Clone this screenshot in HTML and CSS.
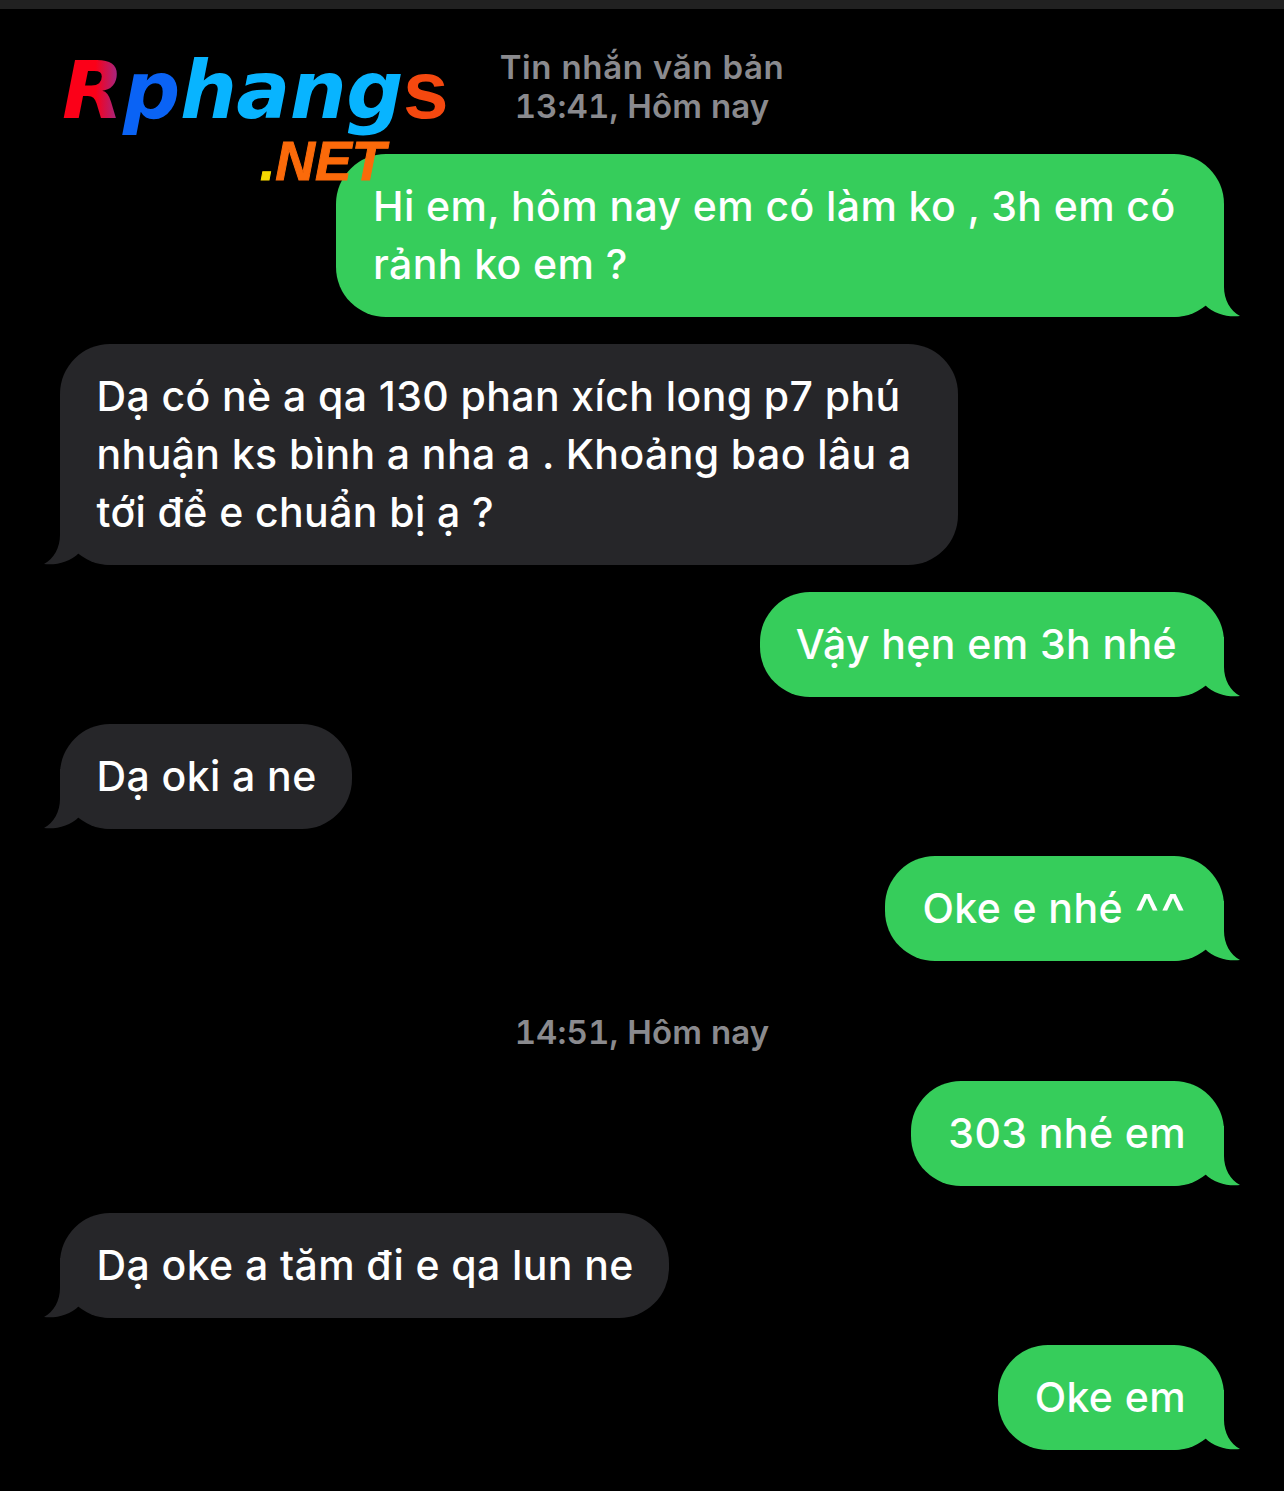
FILE: index.html
```html
<!DOCTYPE html>
<html lang="vi">
<head>
<meta charset="utf-8">
<title>Tin nhắn</title>
<link rel="stylesheet" href="styles.css">
</head>
<body>
<svg class="defs" width="0" height="0" aria-hidden="true"><symbol id="tail" viewBox="0 0 70 60"><path d="M54 0V30C54 42 60 54 70 59C58 60.500 44 57 35 48C28 54 16 60 0 60V0Z"/></symbol></svg>
<div class="topbar"></div>
<div class="logo">
  <div class="logo-main"><span class="l-r">R</span><span class="l-p">p</span><span class="l-h">hang</span><span class="l-s">s</span></div>
  <div class="logo-net"><span class="l-dot">.</span>NET</div>
</div>
<main class="thread">
  <div class="time time-first"><span class="time-label">Tin nhắn văn bản</span><br>13:41, Hôm nay</div>
  <div class="bubble out wide">Hi em, hôm nay em có làm ko , 3h em có rảnh ko em ?<svg class="tail"><use href="#tail"/></svg></div>
  <div class="bubble in wide-in">Dạ có nè a qa 130 phan xích long p7 phú nhuận ks bình a nha a . Khoảng bao lâu a tới để e chuẩn bị ạ ?<svg class="tail"><use href="#tail"/></svg></div>
  <div class="bubble out roomy">Vậy hẹn em 3h nhé<svg class="tail"><use href="#tail"/></svg></div>
  <div class="bubble in">Dạ oki a ne<svg class="tail"><use href="#tail"/></svg></div>
  <div class="bubble out">Oke e nhé <span class="carets">^^</span><svg class="tail"><use href="#tail"/></svg></div>
  <div class="time time-mid">14:51, Hôm nay</div>
  <div class="bubble out">303 nhé em<svg class="tail"><use href="#tail"/></svg></div>
  <div class="bubble in">Dạ oke a tăm đi e qa lun ne<svg class="tail"><use href="#tail"/></svg></div>
  <div class="bubble out">Oke em<svg class="tail"><use href="#tail"/></svg></div>
</main>
</body>
</html>
```
FILE: styles.css
```css
* { box-sizing: border-box; }
html, body { margin: 0; height: 100%; }
body {
  background: #000;
  color: #fff;
  font-family: Inter, "Noto Sans", sans-serif;
  position: relative;
  overflow: hidden;
}
.defs { position: absolute; }
.topbar { height: 9px; background: #212121; }
.thread {
  display: flex;
  flex-direction: column;
  gap: 27px;
  padding: 0 60px;
}
.time {
  align-self: center;
  text-align: center;
  color: #8a8a8e;
  font-size: 33px;
  font-weight: 600;
  font-variant-numeric: tabular-nums;
  letter-spacing: 0.1px;
  line-height: 39px;
}
.time-label { letter-spacing: 0.6px; }
.time-first { margin-top: 39px; margin-bottom: 1px; }
.time-mid { margin-top: 25px; margin-bottom: 2px; }
.bubble {
  position: relative;
  isolation: isolate;
  font-size: 41px;
  font-weight: 500;
  letter-spacing: 0.4px;
  line-height: 58px;
  padding: 22.500px 38px 24.500px 37px;
  border-radius: 50px;
  max-width: 898px;
}
.out { align-self: flex-end; background: #36cd5b; }
.in {
  align-self: flex-start;
  background: #262629;
  padding-left: 36.500px;
  padding-right: 35.500px;
}
.wide { width: 888px; padding-right: 40px; }
.wide-in { width: 898px; padding-right: 40px; }
.roomy { padding-left: 36px; padding-right: 47px; }
.carets {
  font-size: 54px;
  font-weight: 400;
  line-height: 0;
  vertical-align: -9px;
}
.tail {
  position: absolute;
  z-index: -1;
  bottom: 0;
  width: 70px;
  height: 60px;
}
.out .tail { right: -16px; fill: #36cd5b; }
.in .tail { left: -16px; fill: #262629; transform: scaleX(-1); }
.logo {
  position: absolute;
  left: 62px;
  top: 42px;
  z-index: 2;
  width: 390px;
  font-family: "DejaVu Sans", sans-serif;
  font-style: italic;
  font-weight: 700;
}
.logo-main {
  font-size: 80px;
  line-height: 96px;
  letter-spacing: -0.5px;
  white-space: nowrap;
}
.l-r {
  background: linear-gradient(90deg, #fb0018 55%, #8e2f9c);
  -webkit-background-clip: text;
  background-clip: text;
  color: transparent;
}
.l-p { color: #0a63f5; }
.l-h { color: #08b4ff; }
.l-s {
  color: #f5480f;
  font-family: "Liberation Sans", sans-serif;
  font-style: normal;
  font-size: 82px;
}
.logo-net {
  position: absolute;
  left: 198px;
  top: 96px;
  color: #fb6a0a;
  font-family: "Liberation Sans", sans-serif;
  font-size: 55px;
  line-height: 46px;
  white-space: nowrap;
  -webkit-text-stroke: 1px #fb6a0a;
}
.l-dot { color: #f7d900; -webkit-text-stroke: 1px #f7d900; }
```
